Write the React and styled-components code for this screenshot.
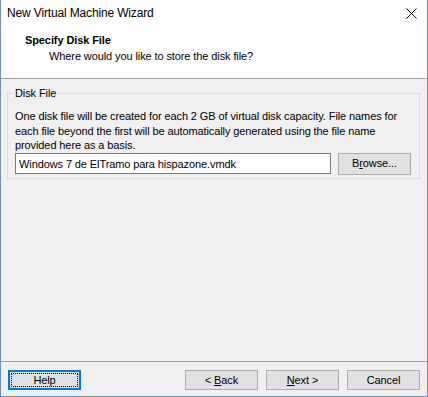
import React, { useState } from "react";
import styled, { createGlobalStyle } from "styled-components";

const GlobalStyle = createGlobalStyle`
  html, body {
    margin: 0;
    padding: 0;
    background: #ffffff;
  }
  body {
    font-family: "Liberation Sans", Arial, sans-serif;
    font-size: 11px;
    letter-spacing: -0.1px;
    color: #000;
  }
`;

const Window = styled.div`
  width: 428px;
  height: 397px;
  box-sizing: border-box;
  display: flex;
  flex-direction: column;
  border: 1px solid #6f92b8;
  border-top: none;
  background: #f0f0f0;
`;

const TitleBar = styled.div`
  height: 26px;
  display: flex;
  align-items: center;
  justify-content: space-between;
  padding: 0 10px 0 6px;
  background: #ffffff;
`;

const TitleText = styled.span`
  font-size: 12px;
  letter-spacing: -0.15px;
`;

const CloseButton = styled.button`
  width: 12px;
  height: 12px;
  padding: 0;
  border: none;
  background: none;
  display: flex;
  align-items: center;
  justify-content: center;
  margin-top: 1px;
`;

const Header = styled.div`
  height: 53px;
  box-sizing: border-box;
  background: #ffffff;
  border-bottom: 1px solid #a0a0a0;
  padding: 8px 0 0 24px;
  line-height: 13px;
`;

const HeaderTitle = styled.div`
  font-weight: bold;
`;

const HeaderSub = styled.div`
  margin: 3px 0 0 24px;
`;

const Body = styled.div`
  flex: 1;
  padding: 8px 7px 0 6px;
`;

const GroupBox = styled.fieldset`
  margin: 0;
  padding: 0 7px 3px 7px;
  border: 1px solid #dcdcdc;
  line-height: 13px;
`;

const Legend = styled.legend`
  padding: 0 2px;
  margin-left: -2px;
`;

const Info = styled.p`
  margin: 9px 0 0;
  line-height: 14.5px;
  white-space: nowrap;
`;

const FileRow = styled.div`
  display: flex;
  align-items: center;
  gap: 7px;
  margin-top: 0;
`;

const PathInput = styled.input`
  width: 316px;
  height: 21px;
  box-sizing: border-box;
  border: 1px solid #7a7a7a;
  padding: 0 3px;
  font: inherit;
  letter-spacing: inherit;
  background: #ffffff;
  outline: none;
`;

const Button = styled.button`
  width: 73px;
  height: ${(p) => (p.$tall ? "22px" : "20px")};
  box-sizing: border-box;
  background: #e1e1e1;
  border: ${(p) => (p.$focused ? "2px solid #0078d7" : "1px solid #adadad")};
  padding: 0;
  font: inherit;
  letter-spacing: inherit;
  color: #000;
  display: flex;
  align-items: center;
  justify-content: center;
  position: relative;

  u {
    text-decoration: underline;
    text-underline-offset: 1px;
  }
`;

const Label = styled.span`
  white-space: pre;
`;

const FocusRing = styled.span`
  position: absolute;
  inset: 1px;
  border: 1px dotted #000;
  pointer-events: none;
`;

const Footer = styled.div`
  display: flex;
  align-items: center;
  border-top: 1px solid #a0a0a0;
  padding: 8px 7px 6px 7px;
`;

const NavGroup = styled.div`
  display: flex;
  gap: 8px;
  margin-left: auto;
`;

export default function App() {
  const [path, setPath] = useState("Windows 7 de ElTramo para hispazone.vmdk");

  return (
    <>
      <GlobalStyle />
      <Window>
        <TitleBar>
          <TitleText>New Virtual Machine Wizard</TitleText>
          <CloseButton aria-label="Close">
            <svg width="11" height="11" viewBox="0 0 11 11">
              <path d="M0.5 0.5 L10.5 10.5 M10.5 0.5 L0.5 10.5" stroke="#000" strokeWidth="1" />
            </svg>
          </CloseButton>
        </TitleBar>
        <Header>
          <HeaderTitle>Specify Disk File</HeaderTitle>
          <HeaderSub>Where would you like to store the disk file?</HeaderSub>
        </Header>
        <Body>
          <GroupBox>
            <Legend>Disk File</Legend>
            <Info>
              One disk file will be created for each 2 GB of virtual disk capacity. File names for
              <br />
              each file beyond the first will be automatically generated using the file name
              <br />
              provided here as a basis.
            </Info>
            <FileRow>
              <PathInput value={path} onChange={(e) => setPath(e.target.value)} />
              <Button $tall>
                <Label>
                  B<u>r</u>owse...
                </Label>
              </Button>
            </FileRow>
          </GroupBox>
        </Body>
        <Footer>
          <Button $focused>
            <FocusRing />
            <Label>Help</Label>
          </Button>
          <NavGroup>
            <Button>
              <Label>
                {"< "}
                <u>B</u>ack
              </Label>
            </Button>
            <Button>
              <Label>
                <u>N</u>
                {"ext >"}
              </Label>
            </Button>
            <Button>
              <Label>Cancel</Label>
            </Button>
          </NavGroup>
        </Footer>
      </Window>
    </>
  );
}
